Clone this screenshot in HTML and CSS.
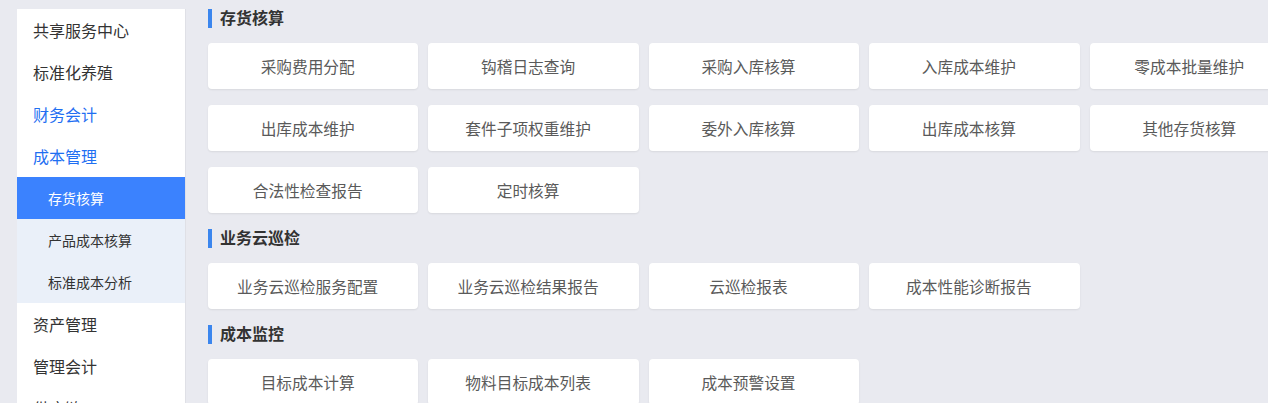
FILE: index.html
```html
<!DOCTYPE html>
<html lang="zh-CN">
<head>
    <meta charset="UTF-8">
    <meta name="viewport" content="width=device-width, initial-scale=1.0">
    <title>成本管理</title>
    <link rel="stylesheet" href="styles.css">
</head>
<body>
<div class="page">
    <ul class="sidebar">
        <li class="menu-item">共享服务中心</li>
        <li class="menu-item">标准化养殖</li>
        <li class="menu-item open">财务会计</li>
        <li class="menu-item open">成本管理</li>
        <li class="sub-item active">存货核算</li>
        <li class="sub-item">产品成本核算</li>
        <li class="sub-item">标准成本分析</li>
        <li class="menu-item">资产管理</li>
        <li class="menu-item">管理会计</li>
        <li class="menu-item">供应链</li>
    </ul>

    <div class="content">
        <div class="section">
            <h2 class="section-title">存货核算</h2>
            <div class="cards">
                <a class="card">采购费用分配</a>
                <a class="card">钩稽日志查询</a>
                <a class="card">采购入库核算</a>
                <a class="card">入库成本维护</a>
                <a class="card">零成本批量维护</a>
                <a class="card">出库成本维护</a>
                <a class="card">套件子项权重维护</a>
                <a class="card">委外入库核算</a>
                <a class="card">出库成本核算</a>
                <a class="card">其他存货核算</a>
                <a class="card">合法性检查报告</a>
                <a class="card">定时核算</a>
            </div>
        </div>

        <div class="section">
            <h2 class="section-title">业务云巡检</h2>
            <div class="cards">
                <a class="card">业务云巡检服务配置</a>
                <a class="card">业务云巡检结果报告</a>
                <a class="card">云巡检报表</a>
                <a class="card">成本性能诊断报告</a>
            </div>
        </div>

        <div class="section">
            <h2 class="section-title">成本监控</h2>
            <div class="cards">
                <a class="card">目标成本计算</a>
                <a class="card">物料目标成本列表</a>
                <a class="card">成本预警设置</a>
            </div>
        </div>
    </div>
</div>
</body>
</html>
```

FILE: styles.css
```css
body {
    margin: 0;
    background-color: #e9eaf0;
    font-family: "Noto Sans CJK SC", "Noto Sans", sans-serif;
    color: #333;
    overflow: hidden;
    height: 403px;
}
.page {
    display: flex;
    align-items: flex-start;
    padding-top: 9px;
}
.sidebar {
    list-style: none;
    margin: 0 0 0 17px;
    padding: 0;
    width: 168px;
    flex-shrink: 0;
    background: #fff;
    border-right: 1px solid #dfe0e6;
}
.menu-item {
    height: 42px;
    line-height: 42px;
    padding-left: 16px;
    font-size: 16px;
    color: #333;
}
.menu-item.open {
    color: #1f6ff2;
}
.sub-item {
    height: 42px;
    line-height: 42px;
    padding-left: 31px;
    font-size: 14px;
    color: #333;
    background: #eaf0f9;
}
.sub-item.active {
    background: #3b82fe;
    color: #fff;
}
.content {
    padding-left: 22px;
    flex-shrink: 0;
}
.section-title {
    display: flex;
    align-items: flex-start;
    height: 19px;
    line-height: 17px;
    margin: 0 0 15px;
    font-size: 16px;
    font-weight: bold;
    color: #333;
}
.section-title::before {
    content: "";
    width: 4px;
    height: 19px;
    background: #3b86ee;
    margin-right: 8px;
}
.cards {
    display: grid;
    grid-template-columns: repeat(5, 210.4px);
    gap: 16px 10px;
    margin-bottom: 16px;
}
.card {
    display: flex;
    align-items: center;
    justify-content: center;
    box-sizing: border-box;
    height: 46px;
    padding-right: 11px;
    background: #fff;
    border-radius: 4px;
    box-shadow: 0 1px 2px rgba(0, 0, 0, 0.08);
    font-size: 15.7px;
    color: #5a5a5a;
}
```
